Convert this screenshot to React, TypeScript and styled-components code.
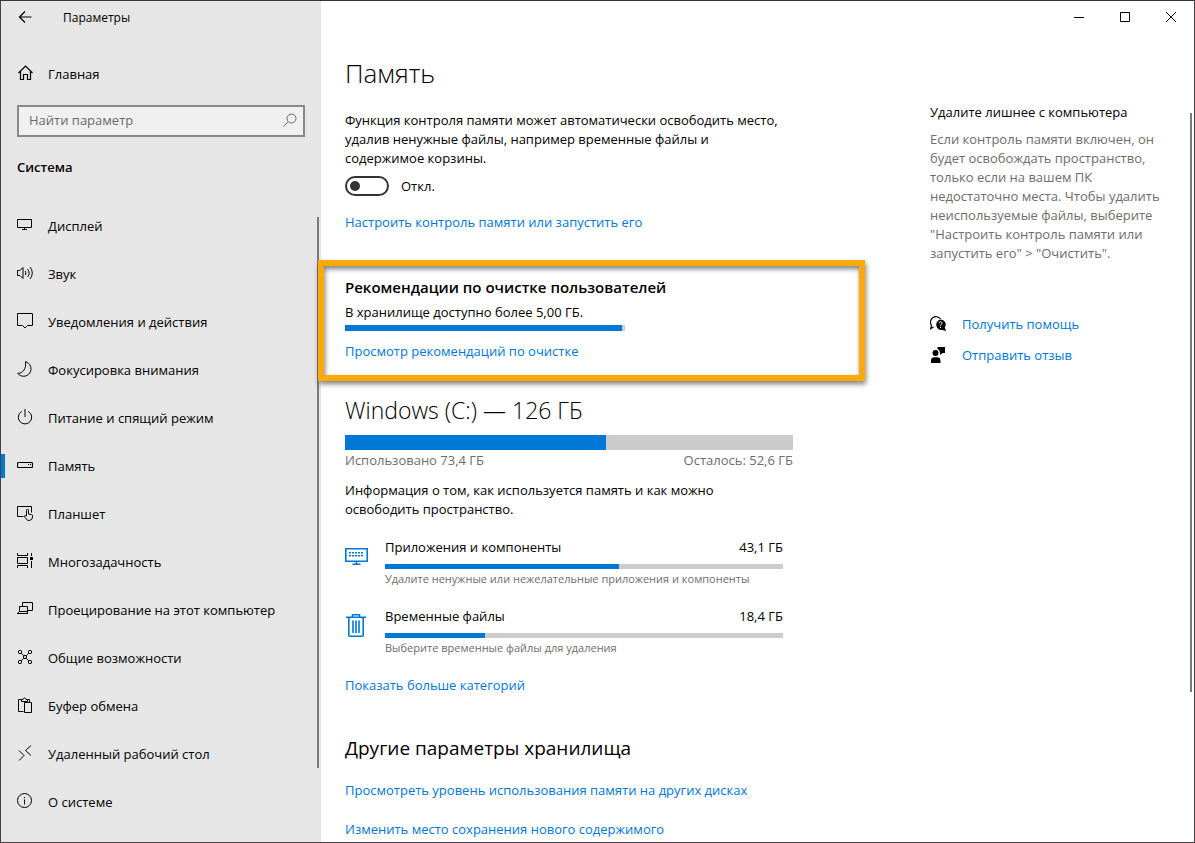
import React, { useState } from 'react';
import styled, { createGlobalStyle } from 'styled-components';

const BLUE = '#0078d7';
const TRACK = '#cccccc';
const MUTED = '#6d6d6d';

const GlobalStyle = createGlobalStyle`
  * { box-sizing: border-box; }
  body {
    margin: 0;
    background: #fff;
    color: #000;
    font: 13px/20px "Open Sans", "Noto Sans", sans-serif;
  }
  h1, h2, h3, p, ul { margin: 0; padding: 0; }
  ul { list-style: none; }
  button, input { font: inherit; color: inherit; }
`;

const Window = styled.div`
  display: flex;
  height: 100vh;
  border: 1px solid #4a4247;
  border-top-color: #39343a;
  background: #fff;
  overflow: hidden;
`;

/* Sidebar */
const Sidebar = styled.aside`
  position: relative;
  flex: 0 0 320px;
  background: #e6e6e6;
`;

const TitleBar = styled.header`
  display: flex;
  align-items: center;
  height: 32px;
`;

const BackButton = styled.button`
  display: flex;
  align-items: center;
  justify-content: center;
  width: 48px;
  height: 32px;
  margin-right: 14px;
  padding: 0;
  border: 0;
  background: none;
`;

const AppName = styled.span`
  padding-top: 2px;
  font-size: 12px;
`;

const NavLink = styled.a<{ $active?: boolean }>`
  position: relative;
  display: flex;
  align-items: center;
  gap: 15px;
  height: 48px;
  padding-left: 16px;
  color: #000;
  text-decoration: none;
  svg { flex: none; margin-bottom: 2px; }
  &::before {
    content: "";
    position: absolute;
    left: 0;
    width: 4px;
    height: 24px;
    background: ${(p) => (p.$active ? BLUE : 'transparent')};
  }
`;

const HomeSlot = styled.div`
  margin-top: 17px;
`;

const SearchBox = styled.label`
  display: flex;
  align-items: center;
  height: 32px;
  margin: 7px 16px 0;
  padding: 0 5px 2px 10px;
  border: 2px solid #888;
  background: #f0f0f0;
`;

const SearchInput = styled.input`
  flex: 1;
  min-width: 0;
  padding: 0;
  border: 0;
  outline: 0;
  background: none;
  &::placeholder { color: #6a6a6a; opacity: 1; }
`;

const GroupTitle = styled.h2`
  margin: 20px 16px 25px;
  font-size: 13px;
  line-height: 20px;
  font-weight: 600;
`;

const ScrollThumb = styled.div<{ $top: number; $bottom: number; $right: number }>`
  position: absolute;
  top: ${(p) => p.$top}px;
  bottom: ${(p) => p.$bottom}px;
  right: ${(p) => p.$right}px;
  width: 2px;
  background: #7a7a7a;
`;

/* Main area */
const Main = styled.main`
  position: relative;
  flex: 1;
  min-width: 0;
`;

const WindowControls = styled.div`
  display: flex;
  justify-content: flex-end;
  height: 32px;
`;

const ControlButton = styled.button`
  display: flex;
  align-items: center;
  justify-content: center;
  width: 46px;
  padding: 0;
  border: 0;
  background: none;
`;

const Columns = styled.div`
  display: flex;
  justify-content: space-between;
  padding: 22px 24px 0;
`;

const Content = styled.div`
  flex: 0 1 448px;
`;

const PageTitle = styled.h1`
  margin-bottom: 20px;
  font-size: 26px;
  line-height: 36px;
  font-weight: 300;
`;

const Paragraph = styled.p`
  max-width: 440px;
  line-height: 19px;
`;

const ToggleRow = styled.label`
  display: flex;
  align-items: center;
  gap: 12px;
  margin: 8px 0 16px;
`;

const Toggle = styled.input`
  appearance: none;
  display: flex;
  align-items: center;
  width: 44px;
  height: 20px;
  margin: 0;
  padding: 0 3px;
  border: 2px solid #333;
  border-radius: 10px;
  &::before {
    content: "";
    width: 10px;
    height: 10px;
    border-radius: 50%;
    background: #333;
  }
  &:checked { justify-content: flex-end; border-color: ${BLUE}; background: ${BLUE}; }
  &:checked::before { background: #fff; }
`;

const Link = styled.a`
  display: block;
  width: fit-content;
  color: ${BLUE};
  text-decoration: none;
`;

const Recommendations = styled.section`
  position: relative;
  margin-top: 45px;
`;

const Highlight = styled.div`
  position: absolute;
  inset: -17px -72px -20px -27px;
  z-index: 2;
  border: 6px solid #f9a90c;
  box-shadow: 1px 3px 5px rgba(0, 0, 0, 0.5), inset 1px 3px 5px rgba(0, 0, 0, 0.5);
  pointer-events: none;
`;

const RecommendationTitle = styled.h2`
  margin-bottom: 5px;
  font-size: 15px;
  line-height: 20px;
  font-weight: 600;
`;

const RecommendationText = styled.p`
  margin-bottom: 3px;
`;

const Track = styled.div<{ $height: number }>`
  height: ${(p) => p.$height}px;
  background: ${TRACK};
`;

const Fill = styled.div`
  height: 100%;
  background: ${BLUE};
`;

const NarrowTrack = styled.div`
  width: 280px;
  margin-bottom: 10px;
`;

const DriveTitle = styled.h2`
  margin: 35px 0 11px;
  font-size: 23px;
  line-height: 28px;
  font-weight: 300;
`;

const DriveLegend = styled.div`
  display: flex;
  justify-content: space-between;
  margin-bottom: 11px;
  color: ${MUTED};
`;

const CategoryList = styled.ul`
  display: flex;
  flex-direction: column;
  gap: 18px;
  margin: 18px 10px 18px 0;
`;

const Category = styled.li`
  display: flex;
  gap: 16px;
  svg { flex: none; margin-top: 7px; }
`;

const CategoryBody = styled.div`
  flex: 1;
`;

const CategoryHead = styled.div`
  display: flex;
  justify-content: space-between;
  margin-bottom: 7px;
`;

const CategoryHint = styled.p`
  margin-top: 1px;
  font-size: 11px;
  line-height: 18px;
  color: ${MUTED};
`;

const SectionTitle = styled.h2`
  margin: 39px 0 18px;
  font-size: 19px;
  line-height: 28px;
  font-weight: 400;
`;

const LinkList = styled.div`
  display: flex;
  flex-direction: column;
  gap: 19px;
`;

const Side = styled.aside`
  flex: 0 0 240px;
  padding-top: 47px;
`;

const SideTitle = styled.h3`
  margin-bottom: 8px;
  font-size: 13px;
  line-height: 20px;
  font-weight: 400;
`;

const SideText = styled.p`
  margin-bottom: 51px;
  line-height: 19px;
  color: ${MUTED};
`;

const SideLink = styled.a`
  display: flex;
  align-items: center;
  gap: 16px;
  margin-bottom: 11px;
  color: ${BLUE};
  text-decoration: none;
`;

type IconProps = { children: React.ReactNode; size?: number };
const Icon = ({ children, size = 16 }: IconProps) => (
  <svg width={size} height={size} viewBox={`0 0 ${size} ${size}`} fill="none" stroke="#000" strokeWidth="1" aria-hidden="true">
    {children}
  </svg>
);

const navItems: { label: string; icon: React.ReactNode; active?: boolean }[] = [
  { label: 'Дисплей', icon: <path d="M.5 2.5h14v8H.5zM7.5 10.5v2M5 12.5h5" /> },
  {
    label: 'Звук',
    icon: <path d="M.5 5.5H3l3-3v11l-3-3H.5zM8.3 6a3.5 3.5 0 0 1 0 4M10.6 4a6 6 0 0 1 0 8M13 2a9 9 0 0 1 0 12" />,
  },
  { label: 'Уведомления и действия', icon: <path d="M.5.5h15v12h-5L8 15l-2.5-2.5h-5z" /> },
  { label: 'Фокусировка внимания', icon: <path d="M8.5.7a7.4 7.4 0 1 1-7.8 11.6C6 12.5 9.5 7.5 8.5.7z" /> },
  { label: 'Питание и спящий режим', icon: <path d="M8 0v8M4.700 2.400a6.700 6.700 0 1 0 6.600 0" /> },
  {
    label: 'Память',
    active: true,
    icon: (
      <>
        <rect x=".5" y="5.5" width="15" height="5" rx="1" strokeWidth="1.2" />
        <path d="M11 7.500h1M13 7.500h1" />
      </>
    ),
  },
  {
    label: 'Планшет',
    icon: (
      <path d="M6.500 11.500h-6v-10h14v6M9.500 11V5.300a1 1 0 0 1 2 0V9l3 .6a1 1 0 0 1 1 1v1.400a3.500 3.500 0 0 1-6.500 1.800l-1.800-2.600c.6-.8 1.500-.7 2.300-.2" />
    ),
  },
  {
    label: 'Многозадачность',
    icon: (
      <>
        <path d="M.5 0v2.500h10V0M.5 4.500h10v6H.5zM.5 15v-2.500h10V15M14.500 0v3M14.500 8v7" />
        <path d="M13 4h3v3h-3z" fill="#000" stroke="none" />
      </>
    ),
  },
  {
    label: 'Проецирование на этот компьютер',
    icon: <path d="M5.500 5.500v-4h10v8h-5M2.500 10.500v-5h8v5M0 12.500h11M.5 12.500l2-2h8v2" />,
  },
  {
    label: 'Общие возможности',
    icon: (
      <>
        <circle cx="3" cy="3" r="1.700" />
        <circle cx="13" cy="3" r="1.700" />
        <circle cx="3" cy="13" r="1.700" />
        <circle cx="13" cy="13" r="1.700" />
        <circle cx="8" cy="8" r="1.600" />
        <path d="M4.300 4.300l2.500 2.500M11.700 4.300L9.200 6.800M4.300 11.700l2.500-2.500M11.700 11.700L9.200 9.200" />
      </>
    ),
  },
  {
    label: 'Буфер обмена',
    icon: <path d="M6.500 14.500h-5v-12h3v2h6v-2h2v3M4.500 2.500h1.500c0-2 3-2 3 0h1.500M7.500 5.500h7v10h-7z" />,
  },
  { label: 'Удаленный рабочий стол', icon: <path d="M2 5.500l5 5-5 5M14 .5l-5.500 5 5.500 5" /> },
  {
    label: 'О системе',
    icon: (
      <>
        <circle cx="7.500" cy="7.500" r="7" />
        <path d="M7.500 6.500v5M7.500 4v1.200" />
      </>
    ),
  },
];

const AppsIcon = () => (
  <svg width="24" height="24" viewBox="0 0 24 24" fill="none" stroke={BLUE} aria-hidden="true">
    <path d="M.8 4.800h21.400v12.400H.8z" strokeWidth="1.600" />
    <path d="M4 8.800h15M4 11.800h15" strokeWidth="1.600" strokeDasharray="2 1" />
    <path d="M11.500 17v3.500M7.500 20.300h8" strokeWidth="1.600" />
  </svg>
);

const TrashIcon = () => (
  <svg width="24" height="24" viewBox="0 0 24 24" fill="none" stroke={BLUE} strokeWidth="1.600" aria-hidden="true">
    <path d="M1 4.200h20M7.500 4.200V1.800h7v2.400M3.800 4.200v17.800c0 .7.500 1.200 1.200 1.200h12c.7 0 1.200-.5 1.200-1.200V4.200M8 7.500v12.500M11 7.500v12.500M14 7.500v12.500" />
  </svg>
);

const categories = [
  {
    name: 'Приложения и компоненты',
    size: '43,1 ГБ',
    percent: 58.8,
    hint: 'Удалите ненужные или нежелательные приложения и компоненты',
    icon: <AppsIcon />,
  },
  {
    name: 'Временные файлы',
    size: '18,4 ГБ',
    percent: 25.1,
    hint: 'Выберите временные файлы для удаления',
    icon: <TrashIcon />,
  },
];

type BarProps = { percent: number; height: number; label: string };
const Bar = ({ percent, height, label }: BarProps) => (
  <Track $height={height} role="progressbar" aria-label={label} aria-valuenow={percent}>
    <Fill style={{ width: `${percent}%` }} />
  </Track>
);

export default function App() {
  const [enabled, setEnabled] = useState(false);

  return (
    <>
      <GlobalStyle />
      <Window>
        <Sidebar>
          <TitleBar>
            <BackButton aria-label="Назад">
              <Icon>
                <path d="M14.500 8H2.500M8 2.500L2.500 8 8 13.500" strokeWidth="1.200" />
              </Icon>
            </BackButton>
            <AppName>Параметры</AppName>
          </TitleBar>
          <HomeSlot>
            <NavLink href="#home">
              <Icon>
                <path d="M1.500 8L8.500 1l7 7M3.500 6.500v8h3v-5h4v5h3v-8" strokeWidth="1.200" />
              </Icon>
              Главная
            </NavLink>
          </HomeSlot>
          <SearchBox>
            <SearchInput type="text" placeholder="Найти параметр" aria-label="Найти параметр" />
            <Icon>
              <g stroke="#666">
                <circle cx="9.500" cy="6.500" r="4.500" />
                <path d="M6.300 9.700L1.500 14.500" />
              </g>
            </Icon>
          </SearchBox>
          <GroupTitle>Система</GroupTitle>
          <nav>
            {navItems.map((item, i) => (
              <NavLink key={item.label} href={`#section-${i}`} $active={item.active}>
                <Icon>{item.icon}</Icon>
                {item.label}
              </NavLink>
            ))}
          </nav>
          <ScrollThumb $top={216} $bottom={74} $right={2} />
        </Sidebar>

        <Main>
          <WindowControls>
            <ControlButton aria-label="Свернуть">
              <Icon size={12}><path d="M1 6.500h10" /></Icon>
            </ControlButton>
            <ControlButton aria-label="Развернуть">
              <Icon size={12}><path d="M1.500 1.500h9v9h-9z" /></Icon>
            </ControlButton>
            <ControlButton aria-label="Закрыть">
              <Icon size={12}><path d="M1 1l10 10M11 1L1 11" /></Icon>
            </ControlButton>
          </WindowControls>

          <Columns>
            <Content>
              <PageTitle>Память</PageTitle>
              <Paragraph>
                Функция контроля памяти может автоматически освободить место, удалив ненужные файлы, например временные
                файлы и содержимое корзины.
              </Paragraph>
              <ToggleRow>
                <Toggle type="checkbox" role="switch" checked={enabled} onChange={(e) => setEnabled(e.target.checked)} />
                {enabled ? 'Вкл.' : 'Откл.'}
              </ToggleRow>
              <Link href="#configure">Настроить контроль памяти или запустить его</Link>

              <Recommendations>
                <RecommendationTitle>Рекомендации по очистке пользователей</RecommendationTitle>
                <RecommendationText>В хранилище доступно более 5,00 ГБ.</RecommendationText>
                <NarrowTrack>
                  <Bar percent={99} height={6} label="Рекомендации по очистке" />
                </NarrowTrack>
                <Link href="#cleanup">Просмотр рекомендаций по очистке</Link>
                <Highlight />
              </Recommendations>

              <DriveTitle>Windows (C:) — 126 ГБ</DriveTitle>
              <Bar percent={58.3} height={15} label="Windows (C:)" />
              <DriveLegend>
                <span>Использовано 73,4 ГБ</span>
                <span>Осталось: 52,6 ГБ</span>
              </DriveLegend>
              <Paragraph>Информация о том, как используется память и как можно освободить пространство.</Paragraph>

              <CategoryList>
                {categories.map((c) => (
                  <Category key={c.name}>
                    {c.icon}
                    <CategoryBody>
                      <CategoryHead>
                        <span>{c.name}</span>
                        <span>{c.size}</span>
                      </CategoryHead>
                      <Bar percent={c.percent} height={5} label={c.name} />
                      <CategoryHint>{c.hint}</CategoryHint>
                    </CategoryBody>
                  </Category>
                ))}
              </CategoryList>
              <Link href="#more">Показать больше категорий</Link>

              <SectionTitle>Другие параметры хранилища</SectionTitle>
              <LinkList>
                <Link href="#other-drives">Просмотреть уровень использования памяти на других дисках</Link>
                <Link href="#save-location">Изменить место сохранения нового содержимого</Link>
              </LinkList>
            </Content>

            <Side>
              <SideTitle>Удалите лишнее с компьютера</SideTitle>
              <SideText>
                Если контроль памяти включен, он будет освобождать пространство, только если на вашем ПК недостаточно
                места. Чтобы удалить неиспользуемые файлы, выберите "Настроить контроль памяти или запустить его" &gt;
                "Очистить".
              </SideText>
              <SideLink href="#help">
                <Icon>
                  <path d="M3.500 11L.8 12.500l.7-3A5 5 0 1 1 10.500 3" strokeWidth="1.200" />
                  <path d="M10.500 3.500a5 5 0 0 1 4.300 7.800L16 15l-3.300-1a5.300 5.300 0 1 1-2.200-10.500z" fill="#000" stroke="none" />
                  <path d="M9 7.300c0-2 3-2 3-.2 0 1.200-1.500 1.200-1.500 2.600M10.500 10.800V12" stroke="#fff" />
                </Icon>
                Получить помощь
              </SideLink>
              <SideLink href="#feedback">
                <Icon>
                  <g fill="#000" stroke="none">
                    <circle cx="5.500" cy="6" r="3" />
                    <path d="M1 16v-2.500a3.500 3.500 0 0 1 3.500-3.300h2.500a3.500 3.500 0 0 1 3.500 3.300V16zM7.500 0H15v6h-2.200L10 8V6a4.500 4.500 0 0 0-2.500-4z" />
                  </g>
                </Icon>
                Отправить отзыв
              </SideLink>
            </Side>
          </Columns>
          <ScrollThumb $top={112} $bottom={150} $right={2} />
        </Main>
      </Window>
    </>
  );
}
